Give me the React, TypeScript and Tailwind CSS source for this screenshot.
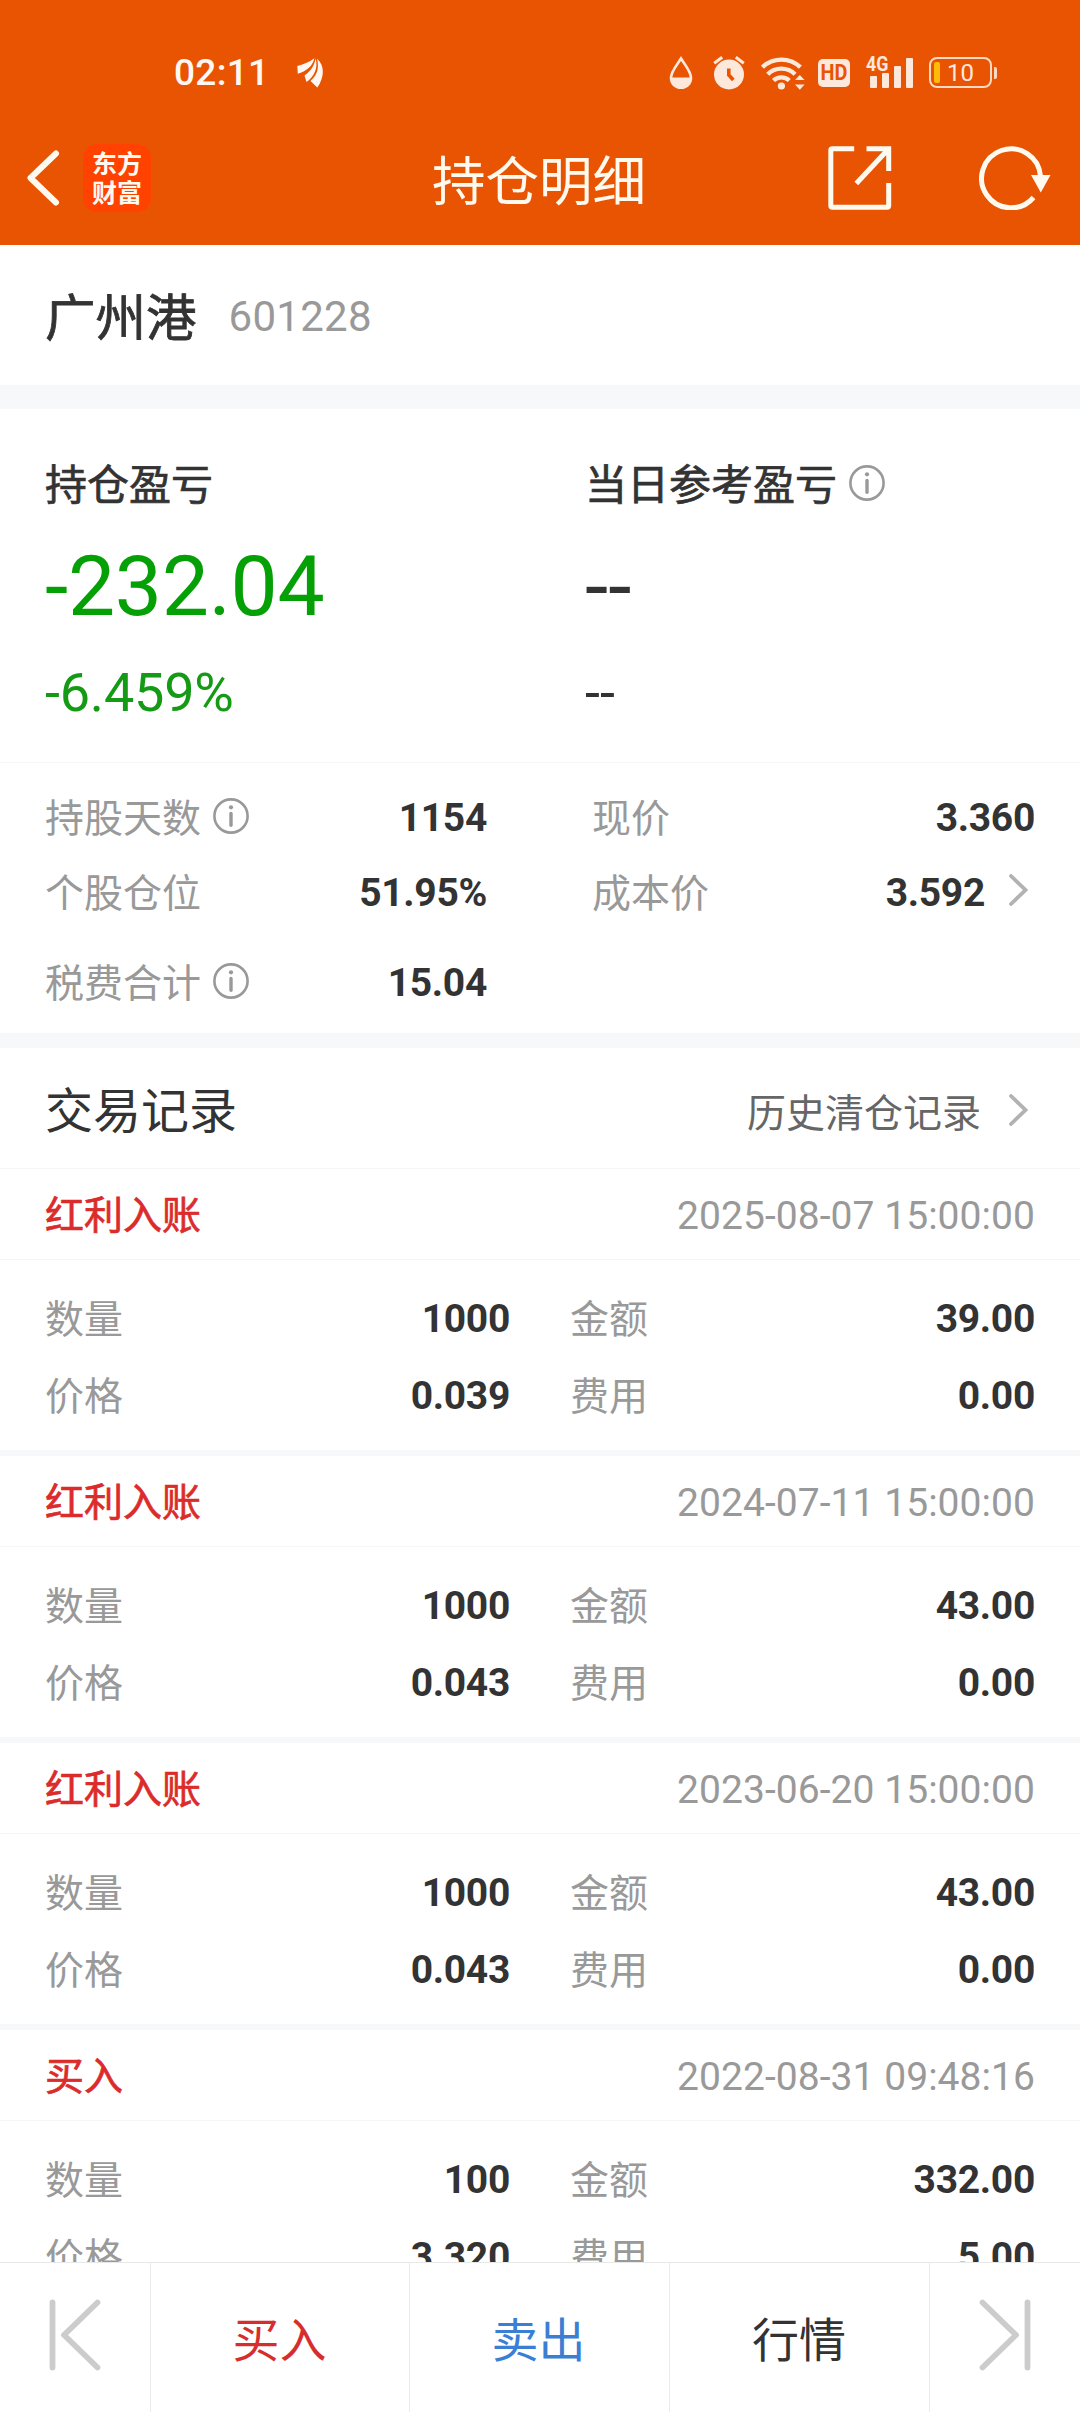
import React from "react";

type TradeRecord = {
  kind: string;
  time: string;
  quantity: string;
  amount: string;
  price: string;
  fee: string;
};

const records: TradeRecord[] = [
  { kind: "红利入账", time: "2025-08-07 15:00:00", quantity: "1000", amount: "39.00", price: "0.039", fee: "0.00" },
  { kind: "红利入账", time: "2024-07-11 15:00:00", quantity: "1000", amount: "43.00", price: "0.043", fee: "0.00" },
  { kind: "红利入账", time: "2023-06-20 15:00:00", quantity: "1000", amount: "43.00", price: "0.043", fee: "0.00" },
  { kind: "买入", time: "2022-08-31 09:48:16", quantity: "100", amount: "332.00", price: "3.320", fee: "5.00" },
];

function InfoIcon() {
  return (
    <svg className="size-9 shrink-0" viewBox="0 0 36 36" fill="none">
      <circle cx="18" cy="18" r="16.6" stroke="#999" strokeWidth="2.6" />
      <circle cx="18" cy="9.3" r="2.1" fill="#999" />
      <path d="M18 15.5V27.3" stroke="#999" strokeWidth="3.4" strokeLinecap="round" />
    </svg>
  );
}

function MoreIcon() {
  return (
    <svg className="h-8 w-[19px] shrink-0" viewBox="0 0 19 32" fill="none">
      <path d="M2 2L16.5 16L2 30" stroke="#b2b2b2" strokeWidth="3.8" strokeLinecap="round" />
    </svg>
  );
}

function StatusBar() {
  return (
    <div className="flex h-[110px] items-center pl-[174px] pt-[35px] text-[#fde8dc]">
      <span className="w-[93px] whitespace-nowrap text-[37px] font-medium leading-none tracking-[0.3px] text-[#fff8f2]">
        02:11
      </span>
      <svg className="ml-[30px] h-[30px] w-[27px]" viewBox="0 0 27 30" fill="#fff8f2">
        <path d="M0.3 8C6 7 12.500 4 17.300 0.300C16 8 9 13.500 0.800 15.800Z" />
        <path d="M18.500 0.400C17.500 8 13 13.500 7.500 17.500L9.500 24C17 18.500 21.500 10 18.500 0.400Z" />
        <path d="M20 0.800C22.300 10 20.500 16.500 13.500 23L20.300 29.500C27.500 19 28 7.500 20 0.800Z" />
      </svg>

      <svg className="ml-[345px] h-[34px] w-6" viewBox="0 0 24 34" fill="none">
        <path d="M12 2.500C8 9 2 15.500 2 21.800C2 27.800 6.500 31.800 12 31.800S22 27.800 22 21.800C22 15.500 16 9 12 2.500Z" stroke="currentColor" strokeWidth="2.600" />
        <path d="M2 21.500H22C22 28 17.500 32 12 32S2 28 2 21.500Z" fill="currentColor" />
      </svg>
      <svg className="ml-5 h-[34px] w-8" viewBox="0 0 32 34" fill="none">
        <circle cx="16" cy="18.500" r="15" fill="currentColor" />
        <path d="M1.200 7.300L9.200 1.200M30.800 7.300L22.800 1.200" stroke="currentColor" strokeWidth="3" />
        <path d="M15.800 12.500V19L20.300 24" stroke="#e95403" strokeWidth="3.600" />
      </svg>
      <svg className="ml-4 h-9 w-11" viewBox="0 0 44 36" fill="none">
        <g stroke="currentColor" strokeWidth="4.400">
          <path d="M1.400 12.200A27.500 27.500 0 0 1 39.400 12.200" />
          <path d="M6.700 19.200A19.500 19.500 0 0 1 34.100 19.200" />
          <path d="M12.500 25.500A11.500 11.500 0 0 1 28.300 25.500" />
        </g>
        <circle cx="20.400" cy="31" r="3.600" fill="currentColor" />
        <path d="M34 25L38.800 20L43.600 25ZM34 29.500L38.800 34.800L43.600 29.500Z" fill="currentColor" />
      </svg>
      <div className="ml-[13px] flex h-7 w-8 items-center justify-center rounded-[5px] bg-[#fde8dc]">
        <span className="scale-x-90 text-[22px] font-bold leading-none text-[#e95403]">HD</span>
      </div>
      <div className="relative ml-[17px] flex h-[34px] w-[46px] items-end gap-[5px] pb-[2px] pl-[3px]">
        <span className="absolute -left-px -top-[2px] origin-left scale-x-85 text-[21px] font-bold leading-none">4G</span>
        <i className="h-3 w-[7px] rounded-[1px] bg-[#fde8dc]" />
        <i className="h-[15px] w-[7px] rounded-[1px] bg-[#fde8dc]" />
        <i className="h-[22px] w-[7px] rounded-[1px] bg-[#fde8dc]" />
        <i className="h-[30px] w-[7px] rounded-[1px] bg-[#fde8dc]" />
      </div>
      <div className="ml-4 flex h-[31px] w-[63px] items-center rounded-[8px] border-2 border-[#fcd9c2] pl-[3px]">
        <i className="h-[21px] w-[6px] rounded-[2px] bg-[#ffba0a]" />
        <span className="ml-[7px] text-[24px] leading-none">10</span>
      </div>
      <i className="ml-[1.500px] h-3 w-[3px] rounded-r-[2px] bg-[#fcd9c2]" />
    </div>
  );
}

function NavBar() {
  return (
    <div className="grid h-[135px] grid-cols-[1fr_auto_1fr] items-center pl-[27px] pr-[29px] text-[#fffaf0]">
      <div className="flex items-center">
        <svg className="h-14 w-[34px]" viewBox="0 0 34 56" fill="none">
          <path d="M29 3.500L3.500 28L29 52.500" stroke="#fffaf0" strokeWidth="6" strokeLinecap="round" strokeLinejoin="round" />
        </svg>
        <div className="ml-[22px] flex size-[68px] flex-col items-center justify-center rounded-[14px] bg-[#ff4200] pt-[2px]">
          <span className="text-[25px] font-bold leading-[29px]">东方</span>
          <span className="text-[25px] font-bold leading-[29px]">财富</span>
        </div>
      </div>
      <h1 className="pt-[11px] text-[53.5px] leading-[60px]">持仓明细</h1>
      <div className="flex items-center justify-end">
        <svg className="h-16 w-16" viewBox="0 0 64 64" fill="none" stroke="#fffaf0" strokeWidth="5">
          <path d="M26.200 2.800H4.500Q2.800 2.800 2.800 4.500V59.500Q2.800 61.200 4.500 61.200H59Q60.700 61.200 60.700 59.500V37" />
          <path d="M38.500 2.800H60.700V25M60 3.500L28.300 37.500" />
        </svg>
        <svg className="ml-[87px] h-16 w-[72px]" viewBox="0 0 72 64" fill="none">
          <path d="M54.500 51.500A29.500 29.500 0 1 1 61.500 30" stroke="#fffaf0" strokeWidth="5" />
          <path d="M52 29H71.500L61.800 46.500Z" fill="#fffaf0" />
        </svg>
      </div>
    </div>
  );
}

function Field({ label, value, info, more }: { label: string; value?: string; info?: boolean; more?: boolean }) {
  return (
    <div className="flex items-center text-[39px] leading-none">
      <span className="pt-px text-[#999]">{label}</span>
      {info && (
        <span className="mb-[6px] ml-3">
          <InfoIcon />
        </span>
      )}
      <span className="ml-auto font-bold tracking-[-0.3px] text-[#333]">{value}</span>
      {more && (
        <span className="mb-2 ml-6 mr-[7px]">
          <MoreIcon />
        </span>
      )}
    </div>
  );
}

function Position() {
  return (
    <>
      <section className="grid h-[354px] grid-cols-[540px_1fr] border-b border-[#f5f6f7] px-[45px] pt-[54px] text-[#333]">
        <div className="flex flex-col">
          <h2 className="text-[42px] leading-[46px] [-webkit-text-stroke:0.7px]">持仓盈亏</h2>
          <p className="mt-[36px] text-[84px] leading-[84px] tracking-[-0.3px] text-[#05a005]">-232.04</p>
          <p className="mt-[28px] text-[54px] leading-[72px] tracking-[-0.2px] text-[#159a15]">-6.459%</p>
        </div>
        <div className="flex flex-col">
          <h2 className="flex items-center text-[42px] leading-[46px]">
            <span className="[-webkit-text-stroke:0.7px]">当日参考盈亏</span>
            <span className="mb-[7px] ml-3">
              <InfoIcon />
            </span>
          </h2>
          <p className="mt-[36px] text-[84px] leading-[84px]">--</p>
          <p className="mt-[28px] text-[54px] leading-[72px]">--</p>
        </div>
      </section>
      <section className="grid h-[270px] grid-cols-[442px_443px] grid-rows-[75px_75px_105px] items-center gap-x-[105px] px-[45px] pt-[18px]">
        <Field label="持股天数" value="1154" info />
        <Field label="现价" value="3.360" />
        <Field label="个股仓位" value="51.95%" />
        <Field label="成本价" value="3.592" more />
        <Field label="税费合计" value="15.04" info />
      </section>
    </>
  );
}

function Trade({ record }: { record: TradeRecord }) {
  return (
    <article className="border-b-6 border-[#f7f8fa]">
      <header className="flex h-[91px] items-center justify-between border-b border-[#f5f6f7] px-[45px] pt-[5px] text-[39px] leading-none">
        <span className="text-[#dc2b2b] [-webkit-text-stroke:0.7px]">{record.kind}</span>
        <time className="tracking-[0.05px] text-[#999]">{record.time}</time>
      </header>
      <div className="grid h-[190px] grid-cols-[465px_465px] grid-rows-[77px_77px] items-center gap-x-[60px] px-[45px] pt-[21px]">
        <Field label="数量" value={record.quantity} />
        <Field label="金额" value={record.amount} />
        <Field label="价格" value={record.price} />
        <Field label="费用" value={record.fee} />
      </div>
    </article>
  );
}

function StepIcon({ flip }: { flip?: boolean }) {
  return (
    <svg className={flip ? "h-[72px] w-[52px] -scale-x-100" : "h-[72px] w-[52px]"} viewBox="0 0 52 72" fill="none">
      <path d="M3.500 3.500V68.500M48.500 3.500L15 36L48.500 68.500" stroke="#ccc" strokeWidth="5.800" strokeLinecap="round" strokeLinejoin="round" />
    </svg>
  );
}

function BottomBar() {
  return (
    <nav className="grid h-[150px] shrink-0 grid-cols-[151px_259px_260px_260px_150px] divide-x divide-[#ebebeb] border-t border-[#e8e8e8] bg-white text-[47px] leading-none">
      <button className="flex items-center justify-center pb-[5px]">
        <StepIcon />
      </button>
      <button className="pr-px pt-[5px] text-[#d62e2e]">买入</button>
      <button className="pr-[2px] pt-[5px] text-[#3b7fd4]">卖出</button>
      <button className="pr-px pt-[5px] text-[#333]">行情</button>
      <button className="flex items-center justify-center pb-[5px]">
        <StepIcon flip />
      </button>
    </nav>
  );
}

export default function App() {
  return (
    <div className="flex h-[2412px] w-[1080px] flex-col overflow-hidden bg-white font-[Roboto,'Noto_Sans_CJK_SC',sans-serif]">
      <header className="shrink-0 bg-[#e95403]">
        <StatusBar />
        <NavBar />
      </header>
      <main className="min-h-0 flex-1 overflow-hidden">
        <section className="flex h-[140px] items-center px-[45px] pt-1">
          <h2 className="pt-[5px] text-[50.5px] leading-none text-[#333] [-webkit-text-stroke:0.8px]">广州港</h2>
          <span className="ml-[32px] text-[42px] leading-none tracking-[0.3px] text-[#999]">601228</span>
        </section>
        <div className="h-6 bg-[#f7f8fa]" />
        <Position />
        <div className="h-[15px] bg-[#f7f8fa]" />
        <section className="flex h-[121px] items-center border-b border-[#f5f6f7] px-[45px] pt-2">
          <h2 className="text-[48px] leading-none text-[#333]">交易记录</h2>
          <span className="ml-auto pt-[5px] text-[39px] leading-none text-[#666]">历史清仓记录</span>
          <span className="mb-1 ml-[28px] mr-[7px]">
            <MoreIcon />
          </span>
        </section>
        {records.map((record) => (
          <Trade key={record.time} record={record} />
        ))}
      </main>
      <BottomBar />
    </div>
  );
}
